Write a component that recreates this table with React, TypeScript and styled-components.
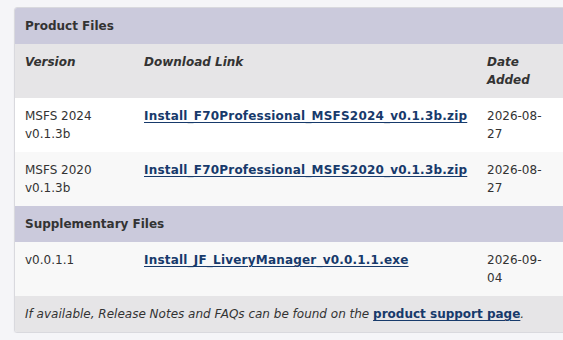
import React from "react";
import styled, { createGlobalStyle } from "styled-components";

const GlobalStyle = createGlobalStyle`
  html, body {
    margin: 0;
    padding: 0;
    background: #f5f5f8;
    overflow: hidden;
  }
  body {
    font-family: "DejaVu Sans", Verdana, sans-serif;
    font-size: 12px;
    color: #333;
  }
`;

const Page = styled.div`
  padding: 7px 0 0 14px;
`;

const Card = styled.div`
  width: 570px;
  border: 1px solid #d9d9de;
  border-radius: 3px;
  overflow: hidden;
  box-shadow: 0 1px 2px rgba(0, 0, 0, 0.06);
`;

const Table = styled.table`
  width: 100%;
  border-collapse: collapse;
  table-layout: fixed;
  line-height: 18px;
`;

const Col = styled.col<{ $w?: number }>`
  ${(p) => (p.$w ? `width: ${p.$w}px;` : "")}
`;

const SectionRow = styled.tr`
  background: #cbcadc;
`;

const SectionCell = styled.th`
  text-align: left;
  font-weight: bold;
  padding: 9px 10px;
`;

const HeadRow = styled.tr`
  background: #e6e5e7;
`;

const HeadCell = styled.th`
  text-align: left;
  vertical-align: top;
  font-weight: bold;
  font-style: italic;
  padding: 9px 10px;
`;

const FileRow = styled.tr<{ $alt?: boolean }>`
  background: ${(p) => (p.$alt ? "#f8f8f8" : "#ffffff")};
`;

const Cell = styled.td`
  vertical-align: top;
  padding: 9px 10px;
`;

const FileLink = styled.a`
  color: #173a6b;
  font-weight: bold;
  text-decoration: underline;
  text-underline-offset: 2px;
  letter-spacing: 0.2px;
`;

const DateText = styled.div`
  width: 62px;
`;

const FooterRow = styled.tr`
  background: #e6e5e7;
`;

const FooterCell = styled.td`
  padding: 9px 10px;
  font-style: italic;
  white-space: nowrap;
`;

const SupportLink = styled.a`
  color: #173a6b;
  font-weight: bold;
  font-style: normal;
  text-decoration: underline;
  text-underline-offset: 2px;
`;

type FileEntry = { version: string[]; name: string; date: string };

const PRODUCT_FILES: FileEntry[] = [
  {
    version: ["MSFS 2024", "v0.1.3b"],
    name: "Install_F70Professional_MSFS2024_v0.1.3b.zip",
    date: "2026-08-27",
  },
  {
    version: ["MSFS 2020", "v0.1.3b"],
    name: "Install_F70Professional_MSFS2020_v0.1.3b.zip",
    date: "2026-08-27",
  },
];

const SUPPLEMENTARY: FileEntry[] = [
  {
    version: ["v0.0.1.1"],
    name: "Install_JF_LiveryManager_v0.0.1.1.exe",
    date: "2026-09-04",
  },
];

function FileRows({ files, startAlt }: { files: FileEntry[]; startAlt: boolean }) {
  return (
    <>
      {files.map((f, i) => (
        <FileRow key={f.name} $alt={(i % 2 === 1) !== startAlt}>
          <Cell>
            {f.version.map((v) => (
              <div key={v}>{v}</div>
            ))}
          </Cell>
          <Cell>
            <FileLink href="#">{f.name}</FileLink>
          </Cell>
          <Cell>
            <DateText>{f.date}</DateText>
          </Cell>
        </FileRow>
      ))}
    </>
  );
}

export default function App() {
  return (
    <>
      <GlobalStyle />
      <Page>
        <Card>
          <Table>
            <colgroup>
              <Col $w={119} />
              <Col $w={343} />
              <Col />
            </colgroup>
            <thead>
              <SectionRow>
                <SectionCell colSpan={3}>Product Files</SectionCell>
              </SectionRow>
              <HeadRow>
                <HeadCell>Version</HeadCell>
                <HeadCell>Download Link</HeadCell>
                <HeadCell>
                  Date
                  <br />
                  Added
                </HeadCell>
              </HeadRow>
            </thead>
            <tbody>
              <FileRows files={PRODUCT_FILES} startAlt={false} />
              <SectionRow>
                <SectionCell colSpan={3}>Supplementary Files</SectionCell>
              </SectionRow>
              <FileRows files={SUPPLEMENTARY} startAlt={true} />
              <FooterRow>
                <FooterCell colSpan={3}>
                  If available, Release Notes and FAQs can be found on the{" "}
                  <SupportLink href="#">product support page</SupportLink>.
                </FooterCell>
              </FooterRow>
            </tbody>
          </Table>
        </Card>
      </Page>
    </>
  );
}
